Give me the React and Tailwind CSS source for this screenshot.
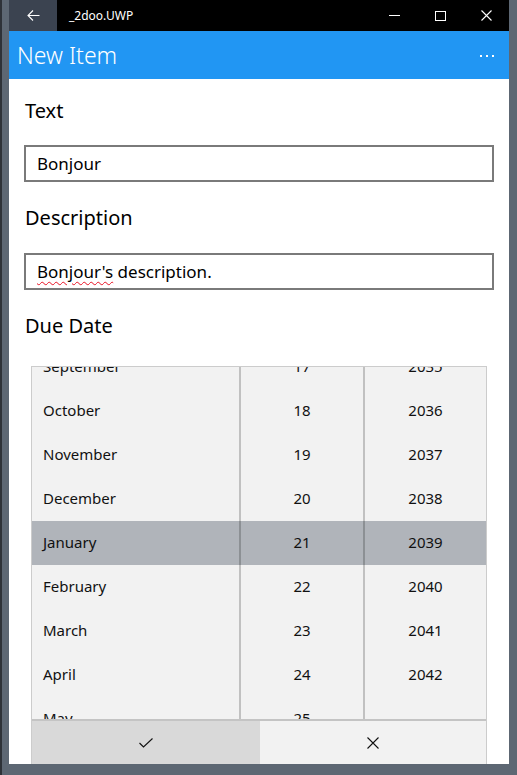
import React from "react";

const months = ["September", "October", "November", "December", "January", "February", "March", "April", "May"];
const days = ["17", "18", "19", "20", "21", "22", "23", "24", "25"];
const years = ["2035", "2036", "2037", "2038", "2039", "2040", "2041", "2042", ""];

const font = { fontFamily: '"Noto Sans", "Open Sans", sans-serif' };

// rows carry the column divider so it darkens over the selected band
function PickerColumn({ items, align, divider, selected = 4 }) {
  return (
    <div className="-mt-[22px]">
      {items.map((item, i) => (
        <div
          key={i}
          className={`h-[44px] flex items-center pb-[2px] text-[15px] text-[#111] ${
            align === "left" ? "pl-[11px]" : "justify-center"
          } ${divider ? "border-r-2 border-black/20" : ""} ${
            i === selected ? "bg-[#b0b4ba]" : "bg-[#f2f2f2]"
          }`}
        >
          {item}
        </div>
      ))}
    </div>
  );
}

export default function App() {
  return (
    <div className="w-[517px] h-[775px] bg-[#5d6773] flex overflow-hidden" style={font}>
      <div className="w-[2px] h-full bg-[#2e3238]" />
      <div className="flex-1 flex flex-col pl-[7px] pr-[8px] pb-[11px]">
        {/* title bar */}
        <div className="h-[31px] bg-black flex items-center">
          <div className="w-[48px] h-full bg-[#3b4350] flex items-center justify-center">
            <svg width="13" height="11" viewBox="0 0 13 11" fill="none" stroke="white" strokeWidth="1.1">
              <path d="M12.5 5.5H1M6 0.5L1 5.5L6 10.5" />
            </svg>
          </div>
          <div className="pl-[12px] text-white text-[12px] leading-none flex-1">_2doo.UWP</div>
          <div className="flex items-center h-full">
            <div className="w-[46px] flex justify-center">
              <div className="w-[11px] h-px bg-white" />
            </div>
            <div className="w-[46px] flex justify-center">
              <div className="w-[11px] h-[10px] border border-white" />
            </div>
            <div className="w-[46px] flex justify-center">
              <svg width="11" height="11" viewBox="0 0 11 11" stroke="white" strokeWidth="1.1">
                <path d="M0.5 0.5L10.5 10.5M10.5 0.5L0.5 10.5" />
              </svg>
            </div>
          </div>
        </div>

        {/* header */}
        <div className="h-[48px] bg-[#2196f3] flex items-center justify-between pl-[8px] pr-[15px]">
          <div className="text-white text-[23px] font-light leading-none">New Item</div>
          <div className="flex gap-[4px] items-center pt-[2px]">
            <div className="w-[2px] h-[2px] bg-white" />
            <div className="w-[2px] h-[2px] bg-white" />
            <div className="w-[2px] h-[2px] bg-white" />
          </div>
        </div>

        {/* content */}
        <div className="flex-1 bg-white flex flex-col px-[15px] overflow-hidden">
          <div className="mt-[18px] text-[20px] leading-[28px] pl-px text-black">Text</div>
          <div className="mt-[20px] h-[37px] border-2 border-[#7a7a7a] flex items-center px-[11px] text-[17px] text-black">
            Bonjour
          </div>
          <div className="mt-[22px] text-[20px] leading-[28px] pl-px text-black">Description</div>
          <div className="mt-[21px] h-[37px] border-2 border-[#7a7a7a] flex items-center px-[11px] text-[17px] text-black">
            <span className="underline decoration-wavy decoration-[#e81123] decoration-1 underline-offset-[3px]">
              Bonjour's
            </span>
            <span>&nbsp;description.</span>
          </div>
          <div className="mt-[22px] text-[20px] leading-[28px] pl-px text-black">Due Date</div>

          {/* date picker */}
          <div className="mt-[26px] mx-[7px] flex-1 flex flex-col border border-[#cccccc] border-b-0 bg-[#f2f2f2]">
            <div className="h-[352px] flex overflow-hidden">
              <div className="w-[209px] overflow-hidden">
                <PickerColumn items={months} align="left" divider />
              </div>
              <div className="w-[124px] overflow-hidden">
                <PickerColumn items={days} divider />
              </div>
              <div className="flex-1 overflow-hidden">
                <PickerColumn items={years} />
              </div>
            </div>
            <div className="flex-1 flex border-t-2 border-[#c4c4c4]">
              <div className="w-[228px] bg-[#d9d9d9] flex items-center justify-center">
                <svg width="14" height="10" viewBox="0 0 14 10" fill="none" stroke="#111" strokeWidth="1.1">
                  <path d="M0.5 5L4.5 9L13.5 0.5" />
                </svg>
              </div>
              <div className="flex-1 flex items-center justify-center">
                <svg width="12" height="12" viewBox="0 0 12 12" fill="none" stroke="#111" strokeWidth="1.1">
                  <path d="M0.5 0.5L11.5 11.5M11.5 0.5L0.5 11.5" />
                </svg>
              </div>
            </div>
          </div>
        </div>
      </div>
    </div>
  );
}
